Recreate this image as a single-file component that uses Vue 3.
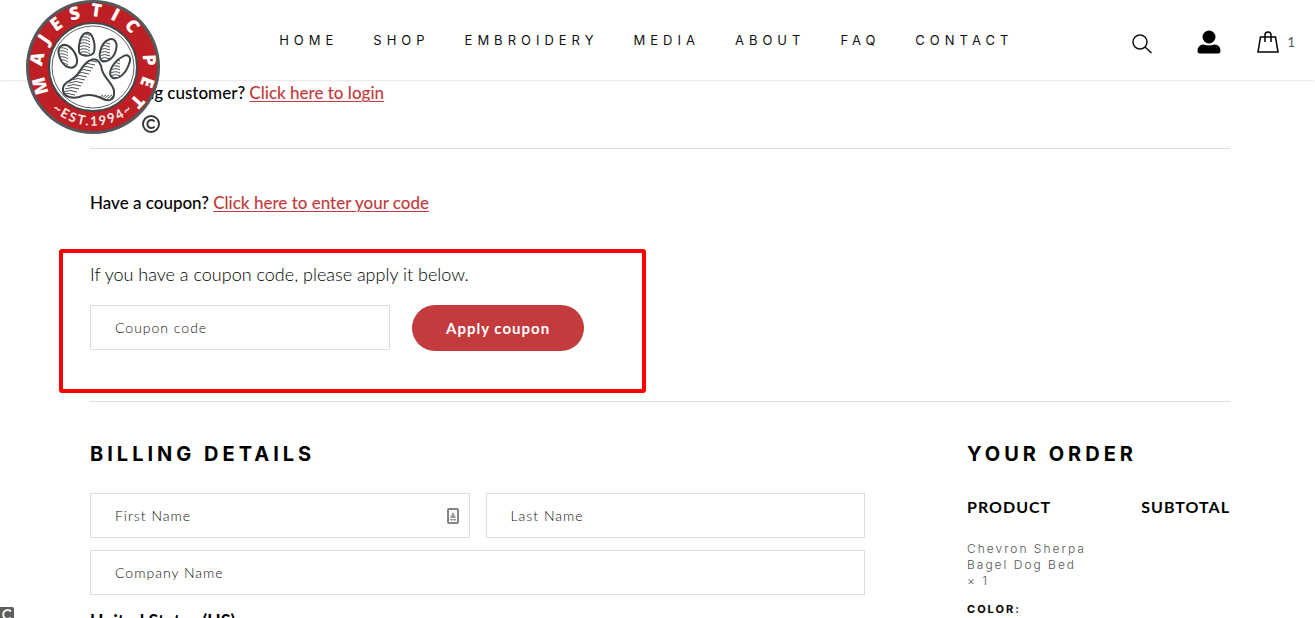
<template>
  <div class="page">
    <header class="header">
      <a class="logo" href="#" aria-label="Majestic Pet">
        <svg viewBox="0 0 136 136" width="136" height="136">
          <defs>
            <path id="ring-top" d="M 25 92 A 50 50 0 1 1 91 111" />
            <path id="ring-bottom" d="M 13 88 A 59 59 0 0 0 123 88" />
            <clipPath id="pads">
              <path v-for="pad in pads" :key="pad" :d="pad" />
            </clipPath>
          </defs>
          <circle cx="68" cy="67" r="67" fill="#54585a" />
          <circle cx="68" cy="67" r="64" fill="#bd1f25" />
          <circle cx="68" cy="67" r="44" fill="#fff" stroke="#43484b" stroke-width="2" />
          <circle cx="68" cy="67" r="41" fill="none" stroke="#5c6163" stroke-width="1" />
          <path v-for="pad in pads" :key="pad" :d="pad" fill="#fff" stroke="#3d4245" stroke-width="2" />
          <g clip-path="url(#pads)" stroke="#4c5154" stroke-width="1" fill="none">
            <path v-for="line in hatches" :key="line" :d="line" />
          </g>
          <text class="logo-name"><textPath href="#ring-top">MAJESTIC PET</textPath></text>
          <text class="logo-est"><textPath href="#ring-bottom" startOffset="50%">~EST.1994~</textPath></text>
          <circle cx="126" cy="124" r="8" fill="#fff" stroke="#35393b" stroke-width="2" />
          <path d="M129.500 121.500 A4 4 0 1 0 129.500 126.500" fill="none" stroke="#35393b" stroke-width="2" />
        </svg>
      </a>

      <nav class="nav">
        <a v-for="item in menu" :key="item" href="#">{{ item }}</a>
      </nav>

      <div class="tools">
        <button type="button" aria-label="Search">
          <svg width="22" height="22" viewBox="0 0 22 22" fill="none" stroke="#111" stroke-width="1.500">
            <circle cx="9" cy="9" r="7" />
            <path d="M14 14 L20.500 20" />
          </svg>
        </button>
        <a href="#" class="account" aria-label="My account">
          <svg width="24" height="24" viewBox="0 0 24 24" fill="#000">
            <circle cx="12" cy="7" r="6.500" />
            <path d="M6.500 14.500 Q12 16.500 17.500 14.500 Q23.500 15 23.500 21 Q23.500 23.500 21 23.500 H3 Q0.500 23.500 0.500 21 Q0.500 15 6.500 14.500Z" />
          </svg>
        </a>
        <a href="#" class="bag" aria-label="Cart">
          <svg width="22" height="24" viewBox="0 0 22 24" fill="none" stroke="#000" stroke-width="1.500">
            <path d="M3.500 7 H18.500 L21 22 H1 Z M8 12 V5 Q8 2 11 2 Q14 2 14 5 V12" />
          </svg>
          <span>1</span>
        </a>
      </div>
    </header>

    <main class="content">
      <p class="notice login">Returning customer? <a href="#">Click here to login</a></p>

      <section class="coupon">
        <p class="notice">Have a coupon? <a href="#">Click here to enter your code</a></p>
        <form class="coupon-form" @submit.prevent>
          <p>If you have a coupon code, please apply it below.</p>
          <div class="coupon-row">
            <input v-model="coupon" type="text" placeholder="Coupon code" aria-label="Coupon code" />
            <button type="submit">Apply coupon</button>
          </div>
        </form>
      </section>

      <div class="checkout">
        <section class="billing">
          <h3>Billing details</h3>
          <div class="fields">
            <div class="field">
              <input type="text" placeholder="First Name" aria-label="First Name" />
              <svg class="autofill" width="12" height="16" viewBox="0 0 12 16" fill="none">
                <rect x="1" y="1" width="10" height="14" rx="1" stroke="#858585" stroke-width="2" />
                <path d="M6 4 L8 8 H4Z M3.500 8 H8.500 V10 H3.500Z M3 11 H9 V12.500 H3Z" fill="#999" />
              </svg>
            </div>
            <div class="field">
              <input type="text" placeholder="Last Name" aria-label="Last Name" />
            </div>
            <div class="field wide">
              <input type="text" placeholder="Company Name" aria-label="Company Name" />
            </div>
          </div>
          <strong class="country">United States (US)</strong>
        </section>

        <section class="order">
          <h3>Your order</h3>
          <table>
            <thead>
              <tr>
                <th>Product</th>
                <th class="subtotal">Subtotal</th>
              </tr>
            </thead>
            <tbody>
              <tr>
                <td>
                  Chevron Sherpa<br />Bagel Dog Bed<br />× 1
                  <strong>Color:</strong>
                </td>
                <td></td>
              </tr>
            </tbody>
          </table>
        </section>
      </div>
    </main>

    <div class="corner" aria-hidden="true">
      <svg width="14" height="14" viewBox="0 0 14 14">
        <path d="M0 0 H12 Q14 0 14 2 V14 H0Z" fill="#5d5d5d" />
        <path d="M11 4.500 A4.500 4.500 0 1 0 11 10.500" fill="none" stroke="#f3f0e8" stroke-width="2" />
      </svg>
    </div>
  </div>
</template>

<script setup>
import { ref } from 'vue'

const coupon = ref('')

const menu = ['HOME', 'SHOP', 'EMBROIDERY', 'MEDIA', 'ABOUT', 'FAQ', 'CONTACT']

// four toes, then the heel pad
const pads = [
  'M36 46 C42 42 50 50 52 59 C53 66 48 69 43 67 C36 65 30 50 36 46Z',
  'M61 33 C67 31 71 43 69 52 C67 57 56 57 54 52 C53 44 56 34 61 33Z',
  'M83 40 C89 37 93 42 91 50 C89 58 82 63 77 61 C72 57 76 43 83 40Z',
  'M97 57 C103 53 107 57 104 64 C101 73 94 80 88 78 C81 74 88 62 97 57Z',
  'M66 60 C73 57 76 64 77 70 C79 78 88 83 89 91 C90 100 84 102 78 99 C69 94 61 94 54 97 C45 99 37 96 38 88 C39 81 47 81 52 75 C57 69 59 62 66 60Z'
]

const hatches = [
  ...Array.from({ length: 7 }, (_, i) => `M31 ${49 + i * 3} q7 -3 12 1`),
  ...Array.from({ length: 8 }, (_, i) => `M54 ${35 + i * 3} q6 -3 11 1`),
  ...Array.from({ length: 7 }, (_, i) => `M74 ${44 + i * 3} q6 -3 11 0`),
  ...Array.from({ length: 8 }, (_, i) => `M84 ${59 + i * 3} q6 -4 11 -1`),
  ...Array.from({ length: 13 }, (_, i) => `M${58 - i * 2} ${62 + i * 3} q7 -3 14 0`),
  ...Array.from({ length: 5 }, (_, i) => `M${72 + i * 3} 101 q2 -4 6 -6`)
]
</script>

<style>
body {
  background: #fff;
}
</style>

<style scoped>
.page {
  position: relative;
  height: 100vh;
  overflow: hidden;
  font-family: Lato, "Liberation Sans", sans-serif;
  font-size: 16px;
  line-height: 24px;
  color: #000;
}

.page * {
  box-sizing: border-box;
}

.header {
  position: absolute;
  z-index: 2;
  inset: 0 0 auto;
  display: flex;
  align-items: center;
  justify-content: space-between;
  height: 80px;
  padding: 0 20px 0 25px;
  background: #fff;
  box-shadow: 0 0 3px rgba(0, 0, 0, 0.2);
}

.logo {
  align-self: flex-start;
  flex: none;
  width: 136px;
}

.logo svg {
  display: block;
}

.logo-name {
  font-family: "Open Sans", Lato, sans-serif;
  font-size: 18px;
  font-weight: 800;
  letter-spacing: 9px;
  fill: #fff;
}

.logo-est {
  font-size: 13px;
  font-weight: 700;
  letter-spacing: 2px;
  text-anchor: middle;
  fill: #f5e9e6;
}

.nav {
  display: flex;
  gap: 35px;
}

.nav a {
  font-family: Inter, Lato, sans-serif;
  font-size: 13px;
  letter-spacing: 5px;
  color: #111;
  text-decoration: none;
}

.tools {
  display: flex;
  align-items: center;
  padding-top: 4px;
}

.tools button {
  display: flex;
  padding: 4px 0 0;
  border: 0;
  background: none;
}

.tools svg {
  display: block;
}

.account {
  margin: 0 36px 0 44px;
}

.bag {
  display: flex;
  align-items: center;
  gap: 8px;
  font-size: 13px;
  color: #555;
  text-decoration: none;
}

.content {
  padding: 81px 85px 0 90px;
}

p,
h3 {
  margin: 0;
}

.notice {
  font-weight: 500;
  font-size: 17px;
}

.notice a {
  color: #c33b3d;
  text-decoration-thickness: 1px;
  text-underline-offset: 2px;
}

.login {
  padding-bottom: 43px;
  border-bottom: 1px solid #ddd;
}

.coupon {
  padding: 42px 0 50px;
  border-bottom: 1px solid #ddd;
}

.coupon-form {
  position: relative;
  margin-top: 47px;
  font-size: 18px;
  font-weight: 300;
}

/* highlight frame around the coupon form */
.coupon-form::after {
  content: "";
  position: absolute;
  inset: -13px auto -42px -31px;
  box-sizing: border-box;
  width: 587px;
  border: 4px solid #f00;
  border-radius: 3px;
  pointer-events: none;
}

.coupon-row {
  display: flex;
  gap: 22px;
  margin-top: 19px;
}

input {
  width: 100%;
  height: 45px;
  padding: 0 24px;
  border: 1px solid #ddd;
  border-radius: 0;
  background: #fff;
  font-family: inherit;
  font-size: 14px;
  font-weight: 300;
  letter-spacing: 1px;
  color: #111;
}

input::placeholder {
  color: #111;
  opacity: 1;
}

.coupon-row input {
  width: 300px;
}

.coupon-row button {
  height: 46px;
  padding: 0 34px;
  border: 0;
  border-radius: 23px;
  background: #c33b3d;
  font-family: inherit;
  font-size: 15px;
  font-weight: 700;
  letter-spacing: 1px;
  color: #fff;
}

.checkout {
  display: flex;
  gap: 102px;
  padding-top: 40px;
}

.billing {
  flex: 1;
}

.order {
  flex: 0 0 263px;
}

h3 {
  font-family: Inter, Lato, sans-serif;
  font-size: 20px;
  font-weight: 700;
  letter-spacing: 4px;
  text-transform: uppercase;
}

.fields {
  display: grid;
  grid-template-columns: 1fr 1fr;
  gap: 12px 16px;
  margin-top: 27px;
}

.field {
  position: relative;
}

.field input {
  display: block;
}

.wide {
  grid-column: span 2;
}

.autofill {
  position: absolute;
  top: 15px;
  right: 11px;
}

.country {
  display: block;
  margin-top: 14px;
  font-size: 18px;
}

table {
  width: 100%;
  margin-top: 29px;
  border-collapse: collapse;
}

th {
  padding: 0;
  font-size: 16px;
  font-weight: 700;
  letter-spacing: 1px;
  text-align: left;
  text-transform: uppercase;
}

.subtotal {
  text-align: right;
}

td {
  padding: 22px 0 0;
  font-family: Inter, Lato, sans-serif;
  font-size: 12px;
  font-weight: 300;
  line-height: 16px;
  letter-spacing: 2px;
  color: #555;
}

td strong {
  display: block;
  margin-top: 12px;
  font-size: 11px;
  font-weight: 700;
  text-transform: uppercase;
  color: #000;
}

.corner {
  position: absolute;
  bottom: -3px;
  left: 0;
}

.corner svg {
  display: block;
}
</style>
